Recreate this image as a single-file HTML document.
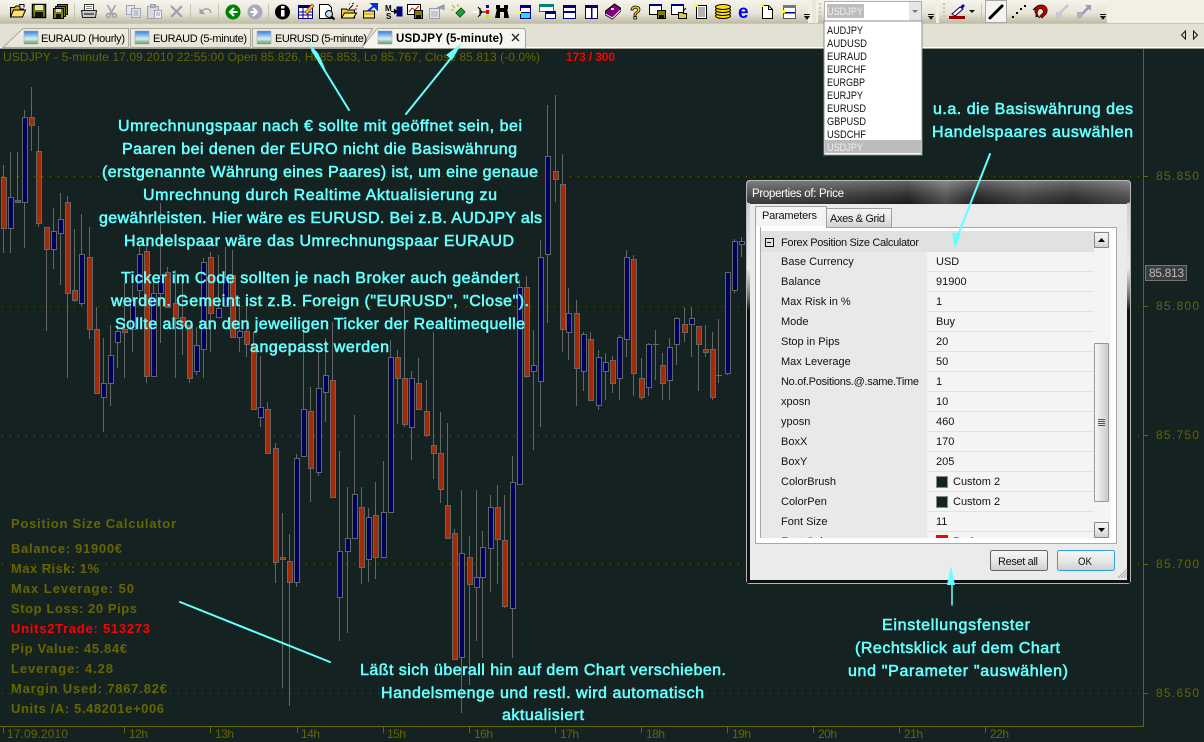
<!DOCTYPE html>
<html><head><meta charset="utf-8"><title>USDJPY chart</title>
<style>
html,body{margin:0;padding:0;background:#152222;}
body{width:1204px;height:742px;overflow:hidden;position:relative;}
svg{position:absolute;left:0;top:0;display:block;font-family:"Liberation Sans",sans-serif;}
.cy{fill:#66ffff;stroke:#66ffff;stroke-width:.55px;font-size:16px;}
.ol{fill:#666600;font-size:12px;}
.ob{fill:#666600;font-weight:bold;font-size:13px;}
.dl{fill:#111;font-size:11px;}
.cb{fill:#111;font-size:11px;}
</style></head><body>
<svg width="1204" height="742" viewBox="0 0 1204 742" xmlns="http://www.w3.org/2000/svg">
<defs>
<linearGradient id="tb" x1="0" y1="0" x2="0" y2="1"><stop offset="0" stop-color="#f6f4ec"/><stop offset=".55" stop-color="#e8e6d8"/><stop offset="1" stop-color="#bfbda6"/></linearGradient>
<linearGradient id="tabg" x1="0" y1="0" x2="0" y2="1"><stop offset="0" stop-color="#f1efe5"/><stop offset="1" stop-color="#e6e4d6"/></linearGradient>
<linearGradient id="tico" x1="0" y1="0" x2="0" y2="1"><stop offset="0" stop-color="#2f7fd8"/><stop offset=".6" stop-color="#dcecf8"/><stop offset="1" stop-color="#5aa040"/></linearGradient>
<linearGradient id="frm" x1="0" y1="0" x2="0" y2="1"><stop offset="0" stop-color="#cfcfcf"/><stop offset=".6" stop-color="#eaeaea"/><stop offset=".85" stop-color="#777"/><stop offset="1" stop-color="#111"/></linearGradient>
<linearGradient id="ttl" x1="0" y1="0" x2="1" y2="0"><stop offset="0" stop-color="#4a4a4a"/><stop offset=".25" stop-color="#3a3a3a"/><stop offset=".42" stop-color="#222"/><stop offset=".52" stop-color="#5a5a5a"/><stop offset=".6" stop-color="#222"/><stop offset=".72" stop-color="#444"/><stop offset=".85" stop-color="#2c2c2c"/><stop offset="1" stop-color="#555"/></linearGradient>
<linearGradient id="ttv" x1="0" y1="0" x2="0" y2="1"><stop offset="0" stop-color="#fff" stop-opacity=".3"/><stop offset="1" stop-color="#000" stop-opacity=".2"/></linearGradient>
<linearGradient id="sb" x1="0" y1="0" x2="1" y2="0"><stop offset="0" stop-color="#f8f8f8"/><stop offset="1" stop-color="#c8c8c8"/></linearGradient>
<linearGradient id="btn" x1="0" y1="0" x2="0" y2="1"><stop offset="0" stop-color="#f6f6f6"/><stop offset=".5" stop-color="#e8e8e8"/><stop offset="1" stop-color="#cfcfcf"/></linearGradient>
<clipPath id="gridclip"><rect x="761" y="231" width="350" height="307"/></clipPath>
</defs>

<!-- chart background -->
<rect x="0" y="48" width="1204" height="694" fill="#152222"/>
<!-- grid dots -->
<g stroke="#666600" stroke-dasharray="1 7" stroke-width="1" shape-rendering="crispEdges">
<path d="M2 176.5H1143M2 306.5H1143M2 435.5H1143M2 564.5H1143M2 693.5H1143"/>
</g>
<!-- axis -->
<g stroke="#666600" stroke-width="1" shape-rendering="crispEdges" fill="none">
<path d="M0 726.5H1143.5V49"/>
<path d="M3.5 727V733M124.5 727V733M210.5 727V733M297.5 727V733M383.5 727V733M469.5 727V733M555.5 727V733M641.5 727V733M727.5 727V733M813.5 727V733M899.5 727V733M985.5 727V733"/>
<path d="M1143 176.5H1148M1143 306.5H1148M1143 435.5H1148M1143 564.5H1148M1143 693.5H1148"/>
</g>
<!-- wicks -->
<path shape-rendering="crispEdges" fill="none" stroke="#666" stroke-width="1" d="M3.5 165V253M10.5 152V253M17.5 152V202M24.5 110V248M31.5 87V151M38.5 126V227M46.5 227V331M53.5 208V269M60.5 193V285M67.5 196V378M74.5 229V302M81.5 214V306M89.5 227V339M96.5 307V393M103.5 338V432M110.5 325V406M117.5 325V368M124.5 283V378M132.5 285V352M139.5 247V300M146.5 247V383M153.5 280V376M160.5 203V343M167.5 267V307M175.5 270V378M182.5 283V355M189.5 325V383M196.5 327V375M203.5 258V378M210.5 252V352M218.5 255V318M225.5 247V307M232.5 250V338M239.5 300V352M246.5 307V357M253.5 332V409M260.5 356V427M267.5 402V454M275.5 443V583M282.5 513V688M289.5 534V706M296.5 454V587M303.5 323V457M310.5 387V502M318.5 352V476M325.5 338V422M332.5 322V497M339.5 451V641M347.5 487V633M354.5 415V538M361.5 487V584M368.5 508V582M375.5 482V579M383.5 461V557M390.5 340V512M397.5 350V424M404.5 300V427M411.5 371V460M418.5 358V409M426.5 380V437M433.5 332V479M440.5 412V503M447.5 423V538M454.5 529V659M461.5 490V713M469.5 536V685M476.5 490V641M482.5 531V658M490.5 495V592M497.5 485V584M504.5 495V608M512.5 456V658M519.5 280V484M526.5 276V378M533.5 330V450M540.5 240V427M547.5 105V323M555.5 95V202M562.5 154V352M568.5 288V360M576.5 300V406M583.5 332V391M590.5 332V400M598.5 350V410M605.5 353V400M612.5 356V393M619.5 335V400M626.5 250V357M633.5 255V396M641.5 358V400M648.5 343V396M655.5 330V380M662.5 353V400M669.5 338V400M676.5 317V365M684.5 307V342M691.5 307V357M698.5 326V391M705.5 325V357M712.5 332V400M718.5 319V383M727.5 272V375M734.5 239V293M741.5 237V257M653 344.5H659M716 375.5H722"/>
<!-- red bodies -->
<path shape-rendering="crispEdges" fill="#a62a05" stroke="#666" stroke-width="1" d="M1.5 177.5h5v51h-5zM15.5 200.5h5v2h-5zM29.5 117.5h5v8h-5zM36.5 151.5h5v72h-5zM44.5 227.5h5v22h-5zM65.5 202.5h5v91h-5zM72.5 290.5h5v10h-5zM87.5 257.5h5v72h-5zM94.5 329.5h5v64h-5zM122.5 329.5h5v3h-5zM144.5 251.5h5v125h-5zM165.5 272.5h5v35h-5zM173.5 303.5h5v15h-5zM180.5 317.5h5v8h-5zM187.5 325.5h5v53h-5zM208.5 257.5h5v56h-5zM230.5 275.5h5v62h-5zM244.5 331.5h5v13h-5zM251.5 344.5h5v65h-5zM265.5 409.5h5v44h-5zM273.5 448.5h5v114h-5zM280.5 557.5h5v2h-5zM287.5 561.5h5v21h-5zM308.5 411.5h5v57h-5zM330.5 380.5h5v117h-5zM359.5 507.5h5v60h-5zM373.5 515.5h5v42h-5zM395.5 357.5h5v21h-5zM402.5 378.5h5v46h-5zM416.5 383.5h5v26h-5zM424.5 411.5h5v24h-5zM431.5 445.5h5v8h-5zM438.5 453.5h5v36h-5zM445.5 505.5h5v33h-5zM452.5 533.5h5v126h-5zM467.5 557.5h5v27h-5zM495.5 507.5h5v32h-5zM502.5 540.5h5v66h-5zM524.5 287.5h5v89h-5zM553.5 171.5h5v8h-5zM560.5 184.5h5v145h-5zM574.5 313.5h5v55h-5zM588.5 339.5h5v61h-5zM610.5 360.5h5v23h-5zM631.5 259.5h5v114h-5zM639.5 378.5h5v19h-5zM660.5 365.5h5v18h-5zM682.5 324.5h5v8h-5zM696.5 326.5h5v18h-5zM703.5 349.5h5v3h-5zM710.5 349.5h5v48h-5z"/>
<!-- blue bodies -->
<path shape-rendering="crispEdges" fill="#00005f" stroke="#666" stroke-width="1" d="M8.5 197.5h5v31h-5zM22.5 117.5h5v85h-5zM51.5 231.5h5v18h-5zM58.5 219.5h5v14h-5zM79.5 254.5h5v49h-5zM101.5 383.5h5v14h-5zM108.5 355.5h5v28h-5zM115.5 331.5h5v11h-5zM130.5 300.5h5v29h-5zM137.5 254.5h5v36h-5zM151.5 293.5h5v83h-5zM158.5 275.5h5v18h-5zM194.5 345.5h5v26h-5zM201.5 262.5h5v87h-5zM216.5 308.5h5v9h-5zM223.5 277.5h5v29h-5zM237.5 331.5h5v6h-5zM258.5 407.5h5v10h-5zM294.5 458.5h5v124h-5zM301.5 409.5h5v47h-5zM316.5 388.5h5v84h-5zM323.5 375.5h5v17h-5zM337.5 551.5h5v46h-5zM345.5 538.5h5v13h-5zM352.5 494.5h5v44h-5zM366.5 517.5h5v42h-5zM381.5 512.5h5v45h-5zM388.5 357.5h5v155h-5zM409.5 378.5h5v49h-5zM459.5 553.5h5v104h-5zM474.5 577.5h5v10h-5zM480.5 547.5h5v30h-5zM488.5 507.5h5v41h-5zM510.5 482.5h5v126h-5zM517.5 287.5h5v197h-5zM531.5 365.5h5v6h-5zM538.5 257.5h5v124h-5zM545.5 156.5h5v98h-5zM566.5 313.5h5v19h-5zM581.5 334.5h5v37h-5zM596.5 357.5h5v48h-5zM603.5 362.5h5v9h-5zM617.5 337.5h5v41h-5zM624.5 257.5h5v82h-5zM646.5 344.5h5v43h-5zM667.5 347.5h5v33h-5zM674.5 318.5h5v26h-5zM689.5 318.5h5v6h-5zM725.5 272.5h5v101h-5zM732.5 241.5h5v49h-5zM739.5 241.5h5v3h-5z"/>

<!-- chart header -->
<text class="ol" x="3" y="61" textLength="537">USDJPY - 5-minute 17.09.2010 22:55:00 Open 85.826, Hi 85.853, Lo 85.767, Close 85.813 (-0.0%)</text>
<text x="566" y="61" font-size="12" font-weight="bold" fill="#ff0000" textLength="49">173 / 300</text>

<!-- axis labels -->
<text class="ol" x="7" y="738" textLength="61">17.09.2010</text>
<text class="ol" x="129" y="738" textLength="19">12h</text>
<text class="ol" x="215" y="738" textLength="19">13h</text>
<text class="ol" x="301" y="738" textLength="19">14h</text>
<text class="ol" x="387" y="738" textLength="19">15h</text>
<text class="ol" x="474" y="738" textLength="19">16h</text>
<text class="ol" x="560" y="738" textLength="19">17h</text>
<text class="ol" x="646" y="738" textLength="19">18h</text>
<text class="ol" x="732" y="738" textLength="19">19h</text>
<text class="ol" x="818" y="738" textLength="19">20h</text>
<text class="ol" x="904" y="738" textLength="19">21h</text>
<text class="ol" x="990" y="738" textLength="19">22h</text>
<!-- price labels -->
<text class="ol" x="1156" y="180" textLength="43">85.850</text>
<text class="ol" x="1156" y="310" textLength="43">85.800</text>
<text class="ol" x="1156" y="439" textLength="43">85.750</text>
<text class="ol" x="1156" y="568" textLength="43">85.700</text>
<text class="ol" x="1156" y="697" textLength="43">85.650</text>
<rect x="1145.5" y="265.5" width="41" height="15" fill="#3c3c3c" stroke="#777" shape-rendering="crispEdges"/>
<text x="1149" y="277" font-size="12" fill="#bbb" textLength="35">85.813</text>

<!-- position size calculator -->
<text class="ob" x="11" y="528" textLength="165">Position Size Calculator</text>
<text class="ob" x="11" y="553" textLength="111">Balance: 91900€</text>
<text class="ob" x="11" y="573" textLength="88">Max Risk: 1%</text>
<text class="ob" x="11" y="593" textLength="123">Max Leverage: 50</text>
<text class="ob" x="11" y="613" textLength="126">Stop Loss: 20 Pips</text>
<text x="11" y="633" font-size="13" font-weight="bold" fill="#ff0000" textLength="139">Units2Trade: 513273</text>
<text class="ob" x="11" y="653" textLength="116">Pip Value: 45.84€</text>
<text class="ob" x="11" y="673" textLength="102">Leverage: 4.28</text>
<text class="ob" x="11" y="693" textLength="156">Margin Used: 7867.82€</text>
<text class="ob" x="11" y="713" textLength="153">Units /A: 5.48201e+006</text>

<!-- toolbar row -->
<rect x="0" y="0" width="1204" height="24" fill="#f2f0e5"/>
<rect x="0" y="0" width="808" height="23" fill="url(#tb)"/>
<rect x="818" y="0" width="118" height="23" fill="url(#tb)"/>
<rect x="939" y="0" width="168" height="23" fill="url(#tb)"/>
<rect x="0" y="24" width="1204" height="24" fill="#e3e1d3"/>
<rect x="0" y="23" width="1204" height="1" fill="#c9c7b4"/>
<rect x="0" y="47" width="1204" height="1" fill="#ffffff"/>
<rect x="0" y="48" width="1204" height="1" fill="#9a9a90"/>

<!-- separators -->
<g stroke="#c4c2b0" shape-rendering="crispEdges"><path d="M74.5 4V20M190.5 4V20M218.5 4V20M268.5 4V20M981.5 4V20"/></g>

<!-- toolbar icons -->
<g stroke-width="1">
<path d="M10.5 17V7.5h4l1.500-1.500h4v3h4" fill="#d8b830" stroke="#000"/><path d="M10.5 17l3-7h12l-3 7z" fill="#ffe070" stroke="#000"/><path d="M19 4.500h5v3" fill="none" stroke="#000"/>
<rect x="32.500" y="4.500" width="13" height="13" fill="#808000" stroke="#000" stroke-width="1.500"/><rect x="35" y="5" width="8" height="5" fill="#e8e8c0"/><rect x="35" y="12" width="8" height="5" fill="#111"/>
<rect x="57.500" y="4.500" width="10" height="10" fill="#808000" stroke="#000"/><rect x="55.500" y="6.500" width="10" height="10" fill="#808000" stroke="#000"/><rect x="53.500" y="8.500" width="10" height="10" fill="#808000" stroke="#000"/><rect x="56" y="9" width="5" height="3" fill="#ddd"/><rect x="56" y="14" width="5" height="4" fill="#111"/>
<path d="M84.500 10V4.500h9V10" fill="#fff" stroke="#333"/><path d="M81.500 10.500h15l-1 7h-13z" fill="#c8c8c8" stroke="#222"/><rect x="84" y="13" width="10" height="2" fill="#666"/><path d="M86 6.500h6M86 8.500h6" stroke="#888"/>
<g fill="none" stroke="#9a9aa8" stroke-width="1.400"><path d="M107.500 5l5 9M115.500 5l-5 9"/><circle cx="108.500" cy="15.500" r="2"/><circle cx="114.500" cy="15.500" r="2"/></g>
<g fill="#e6e6ee" stroke="#a0a0b0"><rect x="126.500" y="5.500" width="8" height="9"/><rect x="131.500" y="8.500" width="9" height="9"/><path d="M133.500 11h5M133.500 13h5M133.500 15h5"/></g>
<g stroke="#a0a0b0"><rect x="147.500" y="6.500" width="11" height="12" fill="#d8d8e0"/><rect x="150.500" y="4.500" width="5" height="3" fill="#bbb"/><rect x="154.500" y="10.500" width="7" height="8" fill="#f0f0f4"/><path d="M156 13h4M156 15h4" /></g>
<path d="M171 6l11 11M182 6l-11 11" stroke="#a0a0ac" stroke-width="2.200"/>
<path d="M201 13c1-5 9-6 10 0" fill="none" stroke="#a0a0b0" stroke-width="1.500"/><path d="M199.500 8v6h6z" fill="#a0a0b0"/>
<circle cx="233" cy="12" r="7.500" fill="#008000"/><path d="M237.500 12h-6M234 8l-4 4 4 4" fill="none" stroke="#fff" stroke-width="2"/>
<circle cx="255" cy="12" r="7.500" fill="#a8a8b8"/><path d="M250.500 12h6M253 8l4 4-4 4" fill="none" stroke="#fff" stroke-width="2"/>
<circle cx="282.500" cy="12" r="7.500" fill="#000"/><rect x="281" y="10" width="3.500" height="6.500" fill="#fff"/><rect x="281" y="6" width="3.500" height="2.500" fill="#fff"/>
<rect x="298.500" y="5.500" width="14" height="13" fill="#fff" stroke="#000080"/><rect x="299" y="5" width="14" height="3" fill="#000080"/><path d="M303 8v10M308 8v10M299 12h13M299 15h13" stroke="#000080"/><path d="M305 12l7-8 2 2-7 8z" fill="#ffc040" stroke="#804000" stroke-width=".7"/>
<path d="M319.500 4.500h9l3 3v11h-12z" fill="#fff" stroke="#000"/><circle cx="329" cy="14" r="3.500" fill="#c0e0f0" stroke="#000"/><path d="M331.500 16.500l3 3" stroke="#000" stroke-width="2"/>
<path d="M341.500 18v-9h5l1 1h7v8z" fill="#e8c840" stroke="#000"/><path d="M341.500 18l3-5h12l-3 5z" fill="#ffe880" stroke="#000"/><path d="M349 9l4-4" stroke="#000"/><path d="M352 3.500h2M356 6h2M355 9h2M349 4h1" stroke="#c00000"/>
<path d="M363.500 18v-7h11v7z" fill="#ffe070" stroke="#000"/><path d="M364 14h10" stroke="#b09000"/><path d="M368 11l7-6M372 4h5v5z" stroke="#0030e0" fill="#0030e0" stroke-width="2"/>
<text x="385" y="11" font-size="8" font-weight="bold" fill="#000">M</text><text x="386" y="19" font-size="8" font-weight="bold" fill="#000">S</text><rect x="396.500" y="6.500" width="6" height="10" fill="#000080"/><path d="M391 11.500h5M394 9l3 2.500-3 2.500" fill="#000" stroke="#000"/>
<rect x="407.500" y="4.500" width="13" height="10" fill="#fff" stroke="#000"/><path d="M409 12l3-4 3 2 4-4" fill="none" stroke="#d00000"/><rect x="414.500" y="10.500" width="8" height="8" fill="#808000" stroke="#000"/><rect x="416" y="15" width="5" height="3" fill="#111"/>
<path d="M429.500 8.500h10v10h-10z" fill="#e6e6ee" stroke="#9a9aaa"/><path d="M431 12h7M431 14h7M431 16h7" stroke="#aaa"/><path d="M437 8l7-3v5" fill="#a0a0b8" stroke="#8a8aa0"/>
<path d="M452 5l3 3M458 4v3M451 10h3" stroke="#c0b000"/><path d="M456 13l5-5 4 4-5 5z" fill="#20a040" stroke="#006020"/>
<path d="M473 12h5M480 8v8M480 12h6" stroke="#000"/><rect x="473" y="11" width="5" height="2" fill="#fff"/><rect x="486" y="5" width="3" height="3" fill="#0000c0"/><rect x="486" y="10" width="3" height="4" fill="#e00000"/><rect x="486" y="15" width="3" height="3" fill="#e0e000"/><path d="M478 7l4 5-4 5" fill="none" stroke="#000"/>
<path d="M495 18l2-10h3v10zM509 18l-2-10h-3v10z" fill="#000"/><rect x="496" y="5" width="4" height="4" fill="#000"/><rect x="504" y="5" width="4" height="4" fill="#000"/><rect x="500" y="8" width="4" height="4" fill="#000"/>
<rect x="520.500" y="5.500" width="10" height="13" fill="#fff" stroke="#000080"/><rect x="520" y="5" width="11" height="3" fill="#000080"/><rect x="521" y="13" width="9" height="5" fill="#20e0e0"/><path d="M521 12.500h9" stroke="#000080"/><rect x="518" y="11" width="3" height="3" fill="#ffff00"/>
<rect x="539.500" y="4.500" width="14" height="7" fill="#fff" stroke="#008080"/><rect x="539" y="4" width="15" height="3" fill="#008080"/><rect x="545.500" y="11.500" width="10" height="7" fill="#fff" stroke="#000080"/><rect x="545" y="11" width="11" height="3" fill="#000080"/>
<rect x="563.500" y="5.500" width="12" height="13" fill="#fff" stroke="#000080"/><rect x="563" y="5" width="13" height="3" fill="#000080"/><rect x="563" y="11" width="13" height="2" fill="#000080"/>
<rect x="585.500" y="5.500" width="12" height="13" fill="#fff" stroke="#000080"/><rect x="585" y="5" width="13" height="3" fill="#000080"/><rect x="591" y="5" width="1.500" height="13" fill="#000080"/>
<path d="M605.500 11l9-7 6 4v3l-8 8-7-4z" fill="#800080" stroke="#000"/><path d="M605.500 14l7 4 8-8" fill="none" stroke="#fff"/><rect x="611" y="8" width="3" height="2" fill="#ffe060"/>
<text x="630" y="19" font-size="18" font-weight="bold" fill="#ffe020" stroke="#000" stroke-width=".8">?</text>
<rect x="649.500" y="4.500" width="12" height="10" fill="#fff" stroke="#000"/><rect x="649" y="4" width="13" height="2" fill="#000080"/><rect x="657.500" y="10.500" width="8" height="8" fill="#808000" stroke="#000"/><rect x="659" y="15" width="5" height="3" fill="#111"/>
<rect x="671.500" y="4.500" width="12" height="10" fill="#fff" stroke="#000"/><rect x="671" y="4" width="13" height="2" fill="#000080"/><path d="M678.500 18.500v-6h4l1 1h3v5z" fill="#e0c840" stroke="#000"/><path d="M683 11l3-3" stroke="#000"/>
<rect x="696.500" y="5.500" width="10" height="13" fill="#fff" stroke="#000"/><path d="M698 8h7M698 10h7M698 12h7M698 14h7M698 16h7" stroke="#666"/><rect x="695" y="4" width="3" height="3" fill="#ffff00"/>
<g fill="#ffe000" stroke="#000"><ellipse cx="723" cy="16" rx="7.500" ry="2.500"/><ellipse cx="723" cy="13" rx="7.500" ry="2.500"/><ellipse cx="723" cy="10" rx="7.500" ry="2.500"/><ellipse cx="723" cy="7" rx="7.500" ry="2.500"/></g>
<text x="738" y="18" font-size="19" font-weight="bold" fill="#0000ff">e</text>
<path d="M762.500 5.500h6l4 4v9h-10z" fill="#fff" stroke="#000"/><path d="M768.500 5.500v4h4" fill="none" stroke="#000"/><rect x="761" y="4" width="3" height="3" fill="#ffff00"/>
<rect x="783.500" y="5.500" width="12" height="13" fill="#fff" stroke="#555"/><rect x="783" y="5" width="13" height="3" fill="#777"/><rect x="784" y="12" width="11" height="1.500" fill="#000080"/><rect x="782" y="10" width="3" height="3" fill="#ffff00"/>
</g>
<!-- chevrons -->
<g fill="#111" shape-rendering="crispEdges">
<rect x="804" y="14" width="6" height="1"/><path d="M804 16h6l-3 4z"/>
<rect x="928" y="14" width="6" height="1"/><path d="M928 16h6l-3 4z"/>
<rect x="1100" y="14" width="6" height="1"/><path d="M1100 16h6l-3 4z"/>
</g>
<rect x="812" y="0" width="4" height="23" fill="#e8e6d8"/>
<!-- grips -->
<g fill="#c9c6b0"><rect x="819" y="3" width="2" height="2"/><rect x="819" y="7" width="2" height="2"/><rect x="819" y="11" width="2" height="2"/><rect x="819" y="15" width="2" height="2"/><rect x="943" y="3" width="2" height="2"/><rect x="943" y="7" width="2" height="2"/><rect x="943" y="11" width="2" height="2"/><rect x="943" y="15" width="2" height="2"/></g>
<!-- combo -->
<rect x="824.500" y="1.500" width="97" height="20" fill="#fff" stroke="#b0b0b0" shape-rendering="crispEdges"/>
<rect x="827" y="4" width="37" height="14" fill="#bdbdbd"/>
<text x="827" y="15" font-size="11" fill="#eee" textLength="36" lengthAdjust="spacingAndGlyphs">USDJPY</text>
<rect x="909" y="2" width="12" height="19" fill="#e6e6e6"/><path d="M912 10h6l-3 3z" fill="#777"/>
<!-- dropdown -->
<rect x="824" y="21" width="98" height="134" fill="#fff" stroke="#8c8c8c" shape-rendering="crispEdges"/>
<rect x="825" y="140" width="96" height="13" fill="#bbbbbb"/>
<text class="cb" x="827" y="34" textLength="36" lengthAdjust="spacingAndGlyphs">AUDJPY</text>
<text class="cb" x="827" y="47" textLength="40" lengthAdjust="spacingAndGlyphs">AUDUSD</text>
<text class="cb" x="827" y="60" textLength="40" lengthAdjust="spacingAndGlyphs">EURAUD</text>
<text class="cb" x="827" y="73" textLength="39" lengthAdjust="spacingAndGlyphs">EURCHF</text>
<text class="cb" x="827" y="86" textLength="38" lengthAdjust="spacingAndGlyphs">EURGBP</text>
<text class="cb" x="827" y="99" textLength="36" lengthAdjust="spacingAndGlyphs">EURJPY</text>
<text class="cb" x="827" y="112" textLength="39" lengthAdjust="spacingAndGlyphs">EURUSD</text>
<text class="cb" x="827" y="125" textLength="39" lengthAdjust="spacingAndGlyphs">GBPUSD</text>
<text class="cb" x="827" y="138" textLength="39" lengthAdjust="spacingAndGlyphs">USDCHF</text>
<text x="827" y="151" font-size="11" fill="#eee" textLength="36" lengthAdjust="spacingAndGlyphs">USDJPY</text>

<!-- drawing tools -->
<path d="M952 14l8-7 3 2-8 7z" fill="#fff" stroke="#000040"/><path d="M960 7l3-3 2 2-3 3z" fill="#0000c0"/><rect x="949" y="16" width="16" height="3" fill="#990000"/>
<path d="M969 10h6l-3 3z" fill="#111"/>
<rect x="985.500" y="0.500" width="21" height="22" fill="#f4f3ee" stroke="#a8a8a8" shape-rendering="crispEdges"/>
<path d="M990 18L1002 6" stroke="#000" stroke-width="3" stroke-linecap="round"/>
<g fill="#000"><rect x="1012" y="16" width="2" height="2"/><rect x="1016" y="12" width="2" height="2"/><rect x="1020" y="8" width="2" height="2"/><rect x="1024" y="5" width="2" height="2"/></g>
<path d="M1036 14c-3-4 0-9 5-9s8 4 5 9l-4 4-2-2 3-3c2-3-3-6-5-3l-1 3 1 3-2 1z" fill="#c00000" stroke="#000" stroke-width=".7"/>
<path d="M1033 10l3-3M1037 15l3 3" stroke="#000"/>
<g fill="none" stroke="#c6c6d0" stroke-width="2.500"><path d="M1056 17l12-12"/></g><path d="M1056 12h6v6h-6z" fill="#c8c8d6"/>
<g fill="none" stroke="#9a9ab0" stroke-width="2.500"><path d="M1078 18l12-12"/></g><path d="M1085 5h6v6z" fill="#9a9ab0"/><path d="M1077 12h5v6h-5z" fill="#b0b0c4"/>

<!-- tabs -->
<path d="M3 47.500L23 28.500H128.500V47.500z" fill="url(#tabg)" stroke="#aca899"/>
<path d="M130.500 47.500V28.500H250.500V47.500z" fill="url(#tabg)" stroke="#aca899"/>
<path d="M252.500 47.500V28.500H372.500L362 47.500z" fill="url(#tabg)" stroke="#aca899"/>
<path d="M362 47.500L376 30l2-1.500H524l1.500 2V47.500z" fill="#f6f5f0" stroke="#aca899"/>
<rect x="364" y="47" width="161" height="1" fill="#f6f5f0"/>
<g><rect x="24" y="31" width="14" height="13" fill="url(#tico)" stroke="#9aaabb" stroke-width=".6"/><rect x="135" y="31" width="14" height="13" fill="url(#tico)" stroke="#9aaabb" stroke-width=".6"/><rect x="257" y="31" width="14" height="13" fill="url(#tico)" stroke="#9aaabb" stroke-width=".6"/><rect x="378" y="31" width="14" height="13" fill="url(#tico)" stroke="#9aaabb" stroke-width=".6"/></g>
<text x="41" y="42" font-size="11" fill="#000" textLength="84">EURAUD (Hourly)</text>
<text x="153" y="42" font-size="11" fill="#000" textLength="94">EURAUD (5-minute)</text>
<text x="275" y="42" font-size="11" fill="#000" textLength="92">EURUSD (5-minute)</text>
<text x="396" y="42" font-size="11.500" font-weight="bold" fill="#000" textLength="107">USDJPY (5-minute)</text>
<path d="M512 34l7 7M519 34l-7 7" stroke="#222" stroke-width="1.300"/>
<path d="M1185.500 31l-4 4 4 4zM1193.500 31l4 4-4 4z" fill="#e3e1d3" stroke="#111"/>

<!-- dialog -->
<rect x="746.500" y="180.500" width="384" height="403" rx="3" fill="#ebebeb" stroke="#b8b8b8"/>
<rect x="747" y="181" width="383" height="23" rx="3" fill="url(#ttl)"/>
<rect x="747" y="181" width="383" height="23" rx="3" fill="url(#ttv)"/>
<rect x="747" y="203" width="3" height="108" fill="url(#frm)"/>
<rect x="1127" y="203" width="3" height="108" fill="url(#frm)"/>
<rect x="747" y="311" width="3" height="272" fill="#111"/>
<rect x="1127" y="311" width="3" height="272" fill="#111"/>
<rect x="747" y="580" width="383" height="3" fill="#111"/>
<text x="752" y="197" font-size="11.500" fill="#fff" textLength="92">Properties of: Price</text>
<!-- panel -->
<rect x="755.500" y="227.500" width="361" height="316" fill="#fff" stroke="#a8a8a8" shape-rendering="crispEdges"/>
<rect x="826.500" y="208.500" width="65" height="19" fill="url(#btn)" stroke="#a0a0a0" shape-rendering="crispEdges"/>
<rect x="755.500" y="206.500" width="71" height="21" fill="#f4f4f4" stroke="#a0a0a0" shape-rendering="crispEdges"/>
<rect x="756" y="226" width="70" height="3" fill="#fff"/>
<text x="762" y="219" class="dl" textLength="55">Parameters</text>
<text x="830" y="222" class="dl" textLength="55">Axes &amp; Grid</text>
<!-- grid -->
<g clip-path="url(#gridclip)">
<rect x="760" y="231" width="351" height="307" fill="#e9e9e9"/>
<rect x="927" y="252" width="167" height="290" fill="#f4f4f4"/>
<rect x="1094" y="231" width="17" height="307" fill="#f4f4f4"/>
<rect x="761" y="231" width="333" height="21" fill="#e1e1e1"/>
<path shape-rendering="crispEdges" stroke="#e2e2e2" d="M927 271.500H1094M927 291.500H1094M927 311.500H1094M927 331.500H1094M927 351.500H1094M927 371.500H1094M927 391.500H1094M927 411.500H1094M927 431.500H1094M927 451.500H1094M927 471.500H1094M927 491.500H1094M927 511.500H1094M927 531.500H1094"/>
<rect x="765.500" y="238.500" width="8" height="8" fill="none" stroke="#111" shape-rendering="crispEdges"/><path d="M767 242.500h4" stroke="#111" shape-rendering="crispEdges"/>
<text class="dl" x="781" y="246" textLength="138">Forex Position Size Calculator</text>
<text class="dl" x="781" y="265">Base Currency</text><text class="dl" x="936" y="265">USD</text>
<text class="dl" x="781" y="285">Balance</text><text class="dl" x="936" y="285">91900</text>
<text class="dl" x="781" y="305">Max Risk in %</text><text class="dl" x="936" y="305">1</text>
<text class="dl" x="781" y="325">Mode</text><text class="dl" x="936" y="325">Buy</text>
<text class="dl" x="781" y="345">Stop in Pips</text><text class="dl" x="936" y="345">20</text>
<text class="dl" x="781" y="365">Max Leverage</text><text class="dl" x="936" y="365">50</text>
<text class="dl" x="781" y="385" textLength="138">No.of.Positions.@.same.Time</text><text class="dl" x="936" y="385">1</text>
<text class="dl" x="781" y="405">xposn</text><text class="dl" x="936" y="405">10</text>
<text class="dl" x="781" y="425">yposn</text><text class="dl" x="936" y="425">460</text>
<text class="dl" x="781" y="445">BoxX</text><text class="dl" x="936" y="445">170</text>
<text class="dl" x="781" y="465">BoxY</text><text class="dl" x="936" y="465">205</text>
<text class="dl" x="781" y="485">ColorBrush</text><rect x="936.500" y="476.500" width="11" height="11" fill="#152222" stroke="#8a8a8a" shape-rendering="crispEdges"/><text class="dl" x="953" y="485">Custom 2</text>
<text class="dl" x="781" y="505">ColorPen</text><rect x="936.500" y="496.500" width="11" height="11" fill="#152222" stroke="#8a8a8a" shape-rendering="crispEdges"/><text class="dl" x="953" y="505">Custom 2</text>
<text class="dl" x="781" y="525">Font Size</text><text class="dl" x="936" y="525">11</text>
<text class="dl" x="781" y="545">Font Color</text><rect x="936" y="535" width="12" height="12" fill="#ff0000"/><text class="dl" x="953" y="545">Red</text>
</g>
<path d="M760.500 227V538" stroke="#a8a8a8" shape-rendering="crispEdges"/>
<!-- scrollbar -->
<rect x="1094.500" y="232.500" width="14" height="15" rx="1" fill="url(#btn)" stroke="#888" shape-rendering="crispEdges"/><path d="M1098 242h7l-3.500-4z" fill="#000"/>
<rect x="1094.500" y="343.500" width="14" height="158" rx="1" fill="url(#sb)" stroke="#999" shape-rendering="crispEdges"/><path d="M1098 419.500h7M1098 421.500h7M1098 423.500h7M1098 425.500h7" stroke="#555" shape-rendering="crispEdges"/>
<rect x="1094.500" y="522.500" width="14" height="15" rx="1" fill="url(#btn)" stroke="#888" shape-rendering="crispEdges"/><path d="M1098 528h7l-3.500 4z" fill="#000"/>
<!-- buttons -->
<rect x="990.500" y="550.500" width="57" height="20" rx="2" fill="url(#btn)" stroke="#666"/>
<text class="dl" x="998" y="565" textLength="40">Reset all</text>
<rect x="1057.500" y="550.500" width="57" height="20" rx="2" fill="url(#btn)" stroke="#2f9fd8"/>
<text class="dl" x="1078" y="565" textLength="14" lengthAdjust="spacingAndGlyphs">OK</text>
<path d="M1118 578l9-9M1121 578l6-6M1124 578l3-3" stroke="#aaa"/>

<!-- annotations lines -->
<g fill="none" stroke="#66ffff" stroke-width="2" stroke-linecap="round">
<path d="M349 110L312 50"/>
<path d="M406 114L452 57"/>
<path d="M180 602L330 662"/>
<path d="M990 154L958 235"/>
<path d="M952 605V580" stroke-width="1.500"/>
</g>
<g fill="#66ffff">
<path d="M308 43L318 53 326 70 313 52z"/>
<path d="M462 43L452 60 446 55z"/>
<path d="M955 249L961 233 952 233z"/>
<path d="M951 566L947 585H955z"/>
</g>

<!-- cyan texts -->
<text class="cy" x="118" y="131" textLength="404">Umrechnungspaar nach € sollte mit geöffnet sein, bei</text>
<text class="cy" x="122" y="154" textLength="395">Paaren bei denen der EURO nicht die Basiswährung</text>
<text class="cy" x="102" y="177" textLength="436">(erstgenannte Währung eines Paares) ist, um eine genaue</text>
<text class="cy" x="143" y="200" textLength="354">Umrechnung durch Realtime Aktualisierung zu</text>
<text class="cy" x="99" y="223" textLength="443">gewährleisten. Hier wäre es EURUSD. Bei z.B. AUDJPY als</text>
<text class="cy" x="124" y="246" textLength="390">Handelspaar wäre das Umrechnungspaar EURAUD</text>
<text class="cy" x="121" y="283" textLength="398">Ticker im Code sollten je nach Broker auch geändert</text>
<text class="cy" x="111" y="306" textLength="418">werden. Gemeint ist z.B. Foreign ("EURUSD", "Close").</text>
<text class="cy" x="115" y="329" textLength="410">Sollte also an den jeweiligen Ticker der Realtimequelle</text>
<text class="cy" x="250" y="352" textLength="139">angepasst werden</text>

<text class="cy" x="933" y="114" textLength="200">u.a. die Basiswährung des</text>
<text class="cy" x="932" y="137" textLength="201">Handelspaares auswählen</text>

<text class="cy" x="360" y="675" textLength="366">Läßt sich überall hin auf dem Chart verschieben.</text>
<text class="cy" x="381" y="698" textLength="323">Handelsmenge und restl. wird automatisch</text>
<text class="cy" x="502" y="720" textLength="82">aktualisiert</text>

<text class="cy" x="882" y="630" textLength="148">Einstellungsfenster</text>
<text class="cy" x="855" y="653" textLength="205">(Rechtsklick auf dem Chart</text>
<text class="cy" x="848" y="676" textLength="220">und "Parameter "auswählen)</text>
</svg>
</body></html>
